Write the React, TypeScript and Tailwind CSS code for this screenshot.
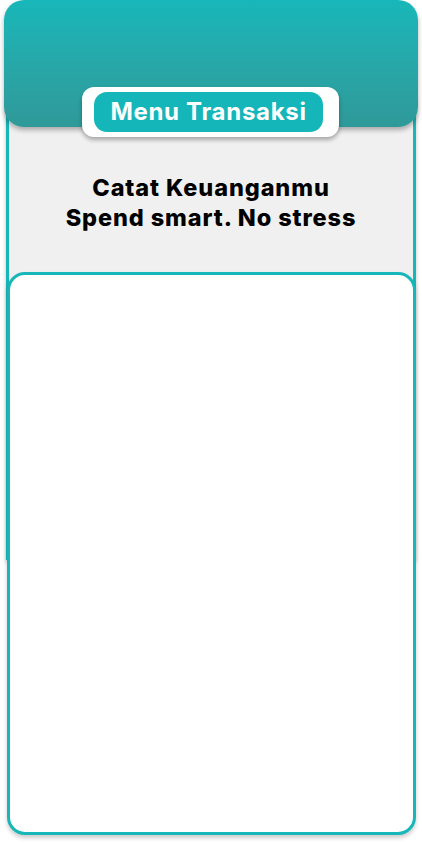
import React from "react";

export default function App() {
  const font = { fontFamily: "Inter, 'Noto Sans', sans-serif" };
  return (
    <div className="relative w-[422px] h-[844px] bg-white overflow-hidden" style={font}>
      {/* header */}
      <div className="relative z-20 mx-[4px] h-[127px] rounded-[20px] bg-gradient-to-b from-[#17b7b9] to-[#2f9999] shadow-[0_3px_5px_rgba(0,0,0,0.3)]">
        <div className="absolute left-[78px] top-[87px] w-[257px] h-[50px] rounded-[12px] bg-white pl-[12px] pr-[16px] py-[5px] shadow-[0_3px_4px_rgba(0,0,0,0.3)]">
          <div className="flex h-full items-center justify-center rounded-[13px] bg-[#15b6b9]">
            <span className="text-[24px] font-bold text-white tracking-[0.7px]">Menu Transaksi</span>
          </div>
        </div>
      </div>
      {/* gray panel */}
      <div className="relative z-0 mx-[6px] -mt-[30px] h-[463px] border-x-[3px] border-[#17b7b9] bg-[#f0f0f0] pt-[76px] shadow-[0_2px_4px_rgba(0,0,0,0.25)]">
        <div className="flex flex-col items-center text-center text-[23.5px] font-extrabold leading-[30px] tracking-[0.9px] text-black">
          <span>Catat Keuanganmu</span>
          <span>Spend smart. No stress</span>
        </div>
      </div>
      {/* white card */}
      <div className="relative z-10 ml-[7px] mr-[6px] -mt-[288px] h-[563px] rounded-[18px] border-[3px] border-[#17b7b9] bg-white shadow-[0_3px_4px_rgba(0,0,0,0.2)]" />
    </div>
  );
}
